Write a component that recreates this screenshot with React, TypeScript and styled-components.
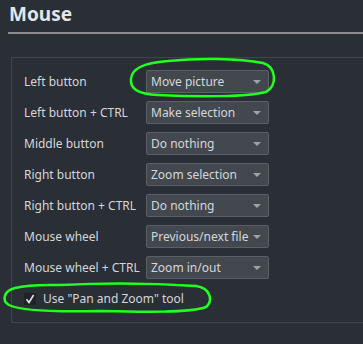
import React from "react";
import styled, { createGlobalStyle } from "styled-components";

const Global = createGlobalStyle`
  html, body { margin: 0; padding: 0; background: #2a2e35; }
  body { font-family: "Noto Sans", "Open Sans", sans-serif; }
`;

const Page = styled.div`
  position: relative;
  width: 363px;
  height: 344px;
  overflow: hidden;
  background: #2a2e35;
`;

const Header = styled.div`
  padding: 1px 0 0 8px;
`;

const Title = styled.h1`
  margin: 0 0 0 1px;
  font-size: 19px;
  line-height: 26px;
  font-weight: 700;
  color: #e3e6ea;
`;

const Rule = styled.div`
  height: 2px;
  margin-top: 5px;
  background: #8a8c8f;
`;

const Group = styled.div`
  margin: 23px 0 0 11px;
  border: 1px solid #40444b;
  border-right: none;
  height: 266px;
  box-sizing: border-box;
  padding: 12px 0 0 12px;
  display: flex;
  flex-direction: column;
  gap: 9px;
`;

const Row = styled.div`
  display: grid;
  grid-template-columns: 122px 123px;
  align-items: center;
  height: 22px;
`;

const Label = styled.span`
  font-size: 12px;
  white-space: nowrap;
  color: #d4d7db;
`;

const Combo = styled.div`
  display: flex;
  align-items: center;
  justify-content: space-between;
  height: 23px;
  box-sizing: border-box;
  padding: 0 7px 0 4px;
  border: 1px solid #5b6067;
  border-radius: 2px;
  background: #43484f;
  font-size: 12px;
  white-space: nowrap;
  color: #d4d7db;
`;

const Arrow = styled.span`
  width: 0;
  height: 0;
  border-left: 4px solid transparent;
  border-right: 4px solid transparent;
  border-top: 4px solid #9ea2a7;
`;

const CheckRow = styled.label`
  display: flex;
  align-items: center;
  gap: 7px;
  margin-top: 3px;
  font-size: 12px;
  color: #d4d7db;
`;

const Box = styled.span`
  width: 12px;
  height: 12px;
  background: #1f2226;
  display: flex;
  align-items: center;
  justify-content: center;
`;

const Mark = styled.svg`
  position: absolute;
  pointer-events: none;
`;

const rows: [string, string][] = [
  ["Left button", "Move picture"],
  ["Left button + CTRL", "Make selection"],
  ["Middle button", "Do nothing"],
  ["Right button", "Zoom selection"],
  ["Right button + CTRL", "Do nothing"],
  ["Mouse wheel", "Previous/next file"],
  ["Mouse wheel + CTRL", "Zoom in/out"],
];

export default function App() {
  return (
    <Page>
      <Global />
      <Header>
        <Title>Mouse</Title>
        <Rule />
      </Header>
      <Group>
        {rows.map(([l, v], i) => (
          <Row key={i}>
            <Label>{l}</Label>
            <Combo>
              <span>{v}</span>
              <Arrow />
            </Combo>
          </Row>
        ))}
        <CheckRow>
          <Box>
            <svg width="10" height="10" viewBox="0 0 10 10">
              <path d="M1.5 5.2 L4 8.5 L8.6 1" stroke="#dfe2e5" strokeWidth="1.6" fill="none" />
            </svg>
          </Box>
          <span>Use "Pan and Zoom" tool</span>
        </CheckRow>
      </Group>
      <Mark style={{ left: 128, top: 57 }} width="150" height="42" viewBox="0 0 150 42">
        <path
          d="M40 4 C70 1 110 1 135 6 C148 10 150 28 138 35 C120 40 70 40 30 38 C10 37 2 32 3 22 C4 12 14 6 40 4 Z"
          stroke="#22ff22"
          strokeWidth="2.5"
          fill="none"
        />
      </Mark>
      <Mark style={{ left: 1, top: 281 }} width="214" height="34" viewBox="0 0 214 34">
        <path
          d="M60 4 C100 2 150 2 195 5 C210 7 212 20 205 26 C190 32 140 31 100 30 C60 31 20 30 8 24 C1 20 2 10 14 7 C30 3 45 4 60 4 Z"
          stroke="#22ff22"
          strokeWidth="2.5"
          fill="none"
        />
      </Mark>
    </Page>
  );
}
